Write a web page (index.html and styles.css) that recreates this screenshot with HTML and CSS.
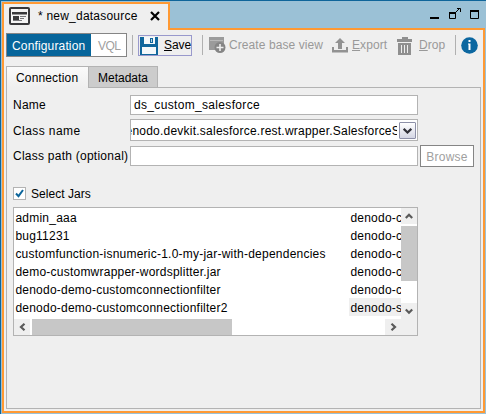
FILE: index.html
```html
<!DOCTYPE html>
<html lang="en">
<head>
<meta charset="utf-8">
<title>new_datasource</title>
<link rel="stylesheet" href="styles.css">
</head>
<body>
<div class="window">
  <header class="titlebar">
    <div class="doc-tab">
      <svg class="doc-icon" width="21" height="18" viewBox="0 0 21 18"><rect x="1" y="1" width="19" height="16" rx="1" fill="#f4f4f4" stroke="#38383a" stroke-width="2"/><path d="M11 9.500h6M11 11.500h4M4 13.500h9" stroke="#77777a" fill="none"/><path d="M3 5h15v2.500H3zM4 9h6v4H4z" fill="#38383a"/></svg>
      <span class="doc-title">* new_datasource</span>
      <svg class="close" width="10" height="10" viewBox="0 0 10 10"><path d="M1 1l8 8M9 1L1 9" stroke="#000" stroke-width="2.2"/></svg>
    </div>
    <div class="title-rest">
      <svg width="50" height="13" viewBox="0 0 50 13"><path d="M0 10h9v2H0z"/><path d="M19.5 5.5h6v6h-6z" fill="none" stroke="#000"/><path d="M19 5h7v2h-7z"/><path d="M26 5l4-4M27 1.5h3.5V5" fill="none" stroke="#000"/><path d="M40.500 3.500h8v8h-8z" fill="none" stroke="#000"/><path d="M40 3h9v2h-9z"/></svg>
    </div>
  </header>
  <main class="body">
    <nav class="toolbar">
      <div class="switch"><span class="on">Configuration</span><span class="off">VQL</span></div>
      <i class="sep sep-a"></i>
      <button class="save"><svg width="18" height="18" viewBox="0 0 18 18"><path d="M0 0h18v18H0z" fill="#10669c"/><path d="M4 0h11v7H4zM2 10h14v7H2z" fill="#f4f8fa"/><path d="M10 1h3v5h-3z" fill="#10669c"/><path d="M11 2h1v3h-1z" fill="#b8d4e4"/></svg><span><u>S</u>ave</span></button>
      <i class="sep sep-b"></i>
      <svg class="i-create" width="17" height="16" viewBox="0 0 17 16"><path d="M0 0h15v13H0z" fill="#9b9b9b"/><path d="M1 3h13v1H1z" fill="#b9b9b9"/><circle cx="11" cy="10.500" r="5.500" fill="#858585"/><path d="M11 7v7M7.500 10.500h7" stroke="#eee" stroke-width="1.600"/></svg>
      <span class="tool t-create">Create base view</span>
      <svg class="i-export" width="16" height="15" viewBox="0 0 16 15"><path d="M8 0l5 5h-3v6H6V5H3zM0 9h2v3h12V9h2v5.500H0z" fill="#929292"/></svg>
      <span class="tool t-export"><u>E</u>xport</span>
      <svg class="i-drop" width="16" height="18" viewBox="0 0 16 18"><path d="M5 0h6v2h4v3H0V2h5zM1 6h13v12H1z" fill="#8f8f8f"/><path d="M4.500 8v8M7.500 8v8M10.500 8v8" stroke="#eee"/></svg>
      <span class="tool t-drop"><u>D</u>rop</span>
      <i class="sep sep-c"></i>
      <svg class="i-info" width="17" height="17" viewBox="0 0 17 17"><circle cx="8.500" cy="8.500" r="8.300" fill="#0c67a0"/><path d="M7.500 3h2v2h-2zM7 6.500h2.500V13H7.500V7.500H7z" fill="#fff"/></svg>
    </nav>
    <section class="tabs">
      <div class="tab active">Connection</div>
      <div class="tab idle">Metadata</div>
      <div class="tab-line"></div>
    </section>
    <section class="panel">
      <form class="form">
        <label>Name</label><div class="field f-name"><span>ds_custom_salesforce</span></div>
        <label class="l-class">Class name</label><div class="field f-class"><div class="clip"><span>denodo.devkit.salesforce.rest.wrapper.SalesforceS</span></div><b class="arrow"><svg width="9" height="6" viewBox="0 0 9 6"><path d="M.7.800l3.800 3.700L8.300.800" fill="none" stroke="#303038" stroke-width="2.200"/></svg></b></div>
        <label class="l-path">Class path (optional)</label><div class="field f-path"></div><button type="button" class="browse">Browse</button>
      </form>
      <div class="check"><span class="box"><svg width="9" height="9" viewBox="0 0 9 9"><path d="M1 4.500l2.500 2.700L8 1" fill="none" stroke="#0c659b" stroke-width="2"/></svg></span><span>Select Jars</span></div>
      <div class="list">
        <div class="rows">
          <div class="row"><span>admin_aaa</span><span>denodo-custom</span></div>
          <div class="row"><span>bug11231</span><span>denodo-custom</span></div>
          <div class="row"><span>customfunction-isnumeric-1.0-my-jar-with-dependencies</span><span>denodo-custom</span></div>
          <div class="row"><span>demo-customwrapper-wordsplitter.jar</span><span>denodo-custom</span></div>
          <div class="row"><span>denodo-demo-customconnectionfilter</span><span>denodo-custom</span></div>
          <div class="row"><span>denodo-demo-customconnectionfilter2</span><span class="sel">denodo-salesforce</span></div>
        </div>
        <div class="vbar">
          <b class="sb"><svg width="8" height="7" viewBox="0 0 8 7"><path d="M.8 5L4 1.800 7.200 5" fill="none" stroke="#5a5a5a" stroke-width="2.200"/></svg></b>
          <div class="vthumb"></div>
          <b class="sb vdown"><svg width="8" height="7" viewBox="0 0 8 7"><path d="M.8 1.500L4 4.700l3.200-3.200" fill="none" stroke="#5a5a5a" stroke-width="2.200"/></svg></b>
        </div>
        <div class="hbar">
          <b class="sb"><svg width="7" height="8" viewBox="0 0 7 8"><path d="M5.500.800L2 4l3.500 3.200" fill="none" stroke="#5a5a5a" stroke-width="2.200"/></svg></b>
          <div class="hthumb"></div>
          <b class="sb hright"><svg width="7" height="8" viewBox="0 0 7 8"><path d="M1.500.800L5 4 1.500 7.200" fill="none" stroke="#5a5a5a" stroke-width="2.200"/></svg></b>
        </div>
        <div class="corner"></div>
      </div>
    </section>
  </main>
</div>
</body>
</html>
```
FILE: styles.css
```css
* { box-sizing: border-box; }
body { margin: 0; font: 12px/18px "Liberation Sans", Arial, sans-serif; letter-spacing: .23px; color: #000; }
svg { display: block; flex: none; }
button { font: inherit; letter-spacing: inherit; margin: 0; padding: 0; }
.window { width: 486px; height: 414px; background: #9bc1d6; border-top: 1px solid #0f659a; border-left: 1px solid #0f659a; padding: 1px 1px 1px 1px; display: flex; flex-direction: column; overflow: hidden; white-space: nowrap; }
.titlebar { display: flex; height: 28px; flex: none; }
.doc-tab { width: 168px; background: #efefef; border: solid #ff9933; border-width: 2px 2px 0 2px; display: flex; padding-left: 5px; }
.doc-icon { margin-top: 3px; }
.doc-title { margin: 3px 0 0 8px; width: 112px; letter-spacing: .22px; }
.close { margin-top: 7px; }
.title-rest { flex: 1; border-bottom: 2px solid #ff9933; display: flex; justify-content: flex-end; padding: 5px 5px 0 0; }
.body { flex: 1; background: #efefef; border: 2px solid #ff9933; border-top: 0; padding: 3px 2px 2px; display: flex; flex-direction: column; min-height: 0; }
.toolbar { display: flex; height: 33px; flex: none; }
.switch { width: 121px; height: 24px; border: 1px solid #858585; display: flex; background: #fff; line-height: 24px; }
.on { width: 84px; background: #06659b; color: #fff; padding-left: 5px; letter-spacing: .15px; }
.off { color: #a0a0a0; padding-left: 7px; letter-spacing: -.6px; }
.sep { width: 1px; height: 20px; background: #b0b0b0; margin-top: 2px; }
.sep-a { margin-left: 5px; }
.sep-b { margin-left: 10px; }
.sep-c { margin-left: 9px; }
.save { width: 54px; height: 21px; margin: 2px 0 0 5px; border: 1px solid #9999cc; background: #efefef; display: flex; padding: 1px; color: #000; }
.save span { margin-left: 6px; letter-spacing: -.1px; line-height: 17px; }
.tool { color: #999; margin-top: 3px; letter-spacing: .08px; }
.i-create { margin: 4px 0 0 6px; }
.t-create { margin-left: 3px; width: 96px; }
.i-export { margin: 5px 0 0 7px; }
.t-export { margin-left: 4px; width: 37px; }
.i-drop { margin: 4px 0 0 8px; }
.t-drop { margin-left: 6px; width: 27px; }
.i-info { margin: 4px 0 0 5px; }
.tabs { display: flex; height: 22px; flex: none; }
.tab { height: 22px; line-height: 22px; border: 1px solid #b3b3b3; padding-left: 9px; }
.active { width: 83px; border-bottom: 0; background: linear-gradient(#fafafa, #efefef); letter-spacing: .15px; }
.idle { width: 69px; border-left: 0; background: #ccc; letter-spacing: 0; }
.tab-line { flex: 1; border-bottom: 1px solid #b3b3b3; }
.panel { flex: 1; border: 1px solid #b3b3b3; border-top: 0; padding: 7px 0 0 6px; }
.form { display: grid; grid-template-columns: 117px 288px 56px; grid-template-rows: 24px 27px 22px; column-gap: 0; margin: 0; }
.form label { grid-column: 1; line-height: 20px; height: 20px; }
.form .l-class { line-height: 25px; letter-spacing: .42px; }
.field { background: #fff; border: 1px solid #b3b3b3; overflow: hidden; }
.f-name { height: 20px; line-height: 19px; padding-left: 3px; letter-spacing: .33px; }
.f-class { height: 22px; display: flex; }
.clip { flex: 1; overflow: hidden; display: flex; justify-content: flex-end; line-height: 22px; margin-right: 2px; }
.clip span { margin-right: -3px; flex: none; }
.arrow { width: 17px; height: 17px; margin: 2px 1px 0 0; border: 1px solid #8d90a8; border-radius: 1px; background: linear-gradient(#fff, #d4d6e4); display: grid; place-items: center; }
.f-path { height: 20px; }
.form .l-path { letter-spacing: .25px; line-height: 21px; }
.browse { width: 54px; height: 22px; margin: -1px 0 0 2px; border: 1px solid #858585; background: #fff; color: #a0a0a0; line-height: 22px; }
.check { display: flex; height: 18px; margin-top: 16px; line-height: 20px; letter-spacing: .05px; }
.box { width: 13px; height: 13px; margin: 3px 5px 0 0; border: 1px solid #b3b3b3; background: #fff; display: grid; place-items: center; }
.list { width: 405px; height: 129px; margin-top: 5px; border: 1px solid #b3b3b3; background: #fff; display: grid; grid-template: 111px 16px / 387px 16px; }
.rows { overflow: hidden; height: 111px; }
.row { display: flex; height: 18px; line-height: 20px; }
.row span { padding-left: 1.4px; flex: none; }
.row span:first-child { width: 335px; }
.sel { background: #efefef; }
.vbar { height: 111px; display: flex; flex-direction: column; }
.sb { width: 16px; height: 16px; background: #efefef; display: grid; place-items: center; flex: none; }
.vthumb { height: 55px; background: #c7c7c7; margin-top: 2px; }
.vdown { margin-top: auto; }
.hbar { display: flex; }
.hthumb { width: 200px; background: #c7c7c7; margin-left: 2px; }
.hright { margin-left: auto; }
.corner { background: #efefef; }
```
